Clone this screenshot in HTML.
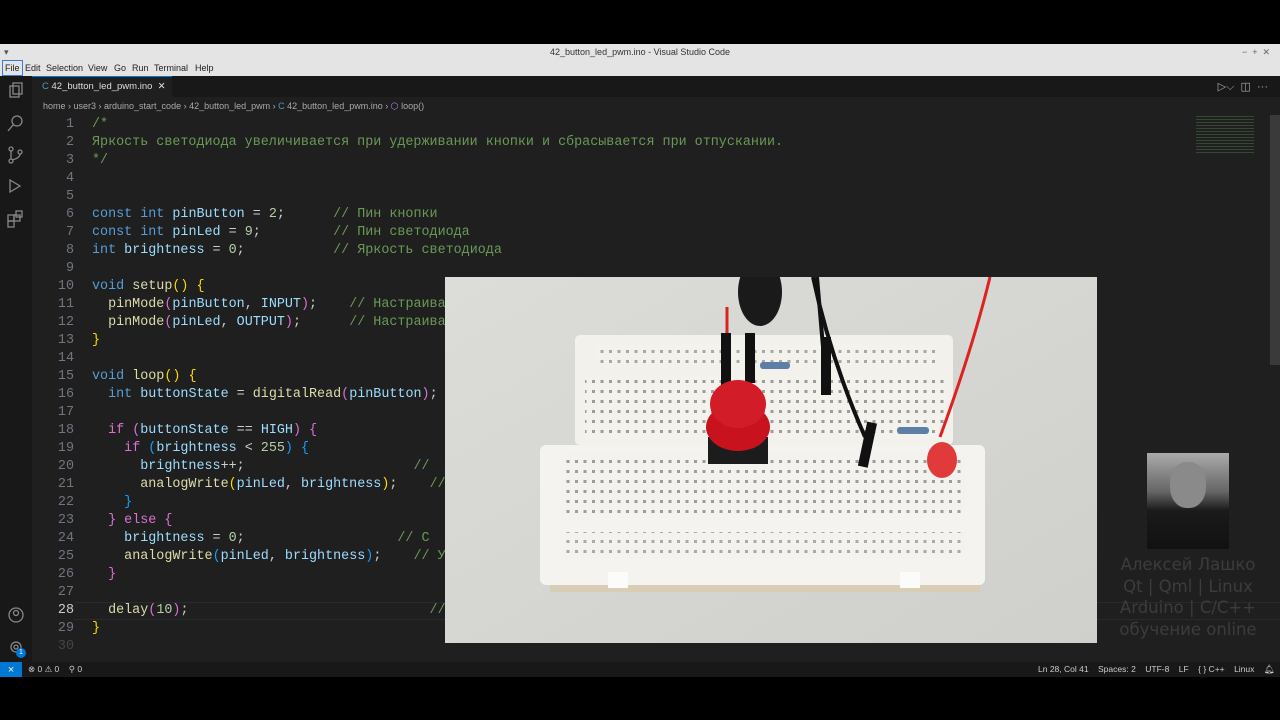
<!DOCTYPE html>
<html><head><meta charset="utf-8"><style>
*{margin:0;padding:0;box-sizing:border-box}
body{width:1280px;height:720px;background:#000;position:relative;overflow:hidden;font-family:"Liberation Sans","DejaVu Sans",sans-serif}
.abs{position:absolute}
#title{left:0;top:44px;width:1280px;height:16px;background:#e4e4e4;font-size:9px;color:#333;text-align:center;line-height:16px}
#menu{left:0;top:60px;width:1280px;height:16px;background:#e4e4e4;font-size:9px;color:#222;line-height:16px}
#menu span{position:absolute;top:0}
#act{left:0;top:76px;width:32px;height:586px;background:#181818}
#tabs{left:32px;top:76px;width:1248px;height:21px;background:#181818}
#tab{left:32px;top:76px;width:140px;height:21px;background:#1f1f1f;border-top:1px solid #0078d4;color:#ddd;font-size:9.5px;line-height:20px;padding-left:10px}
#ed{left:32px;top:97px;width:1248px;height:565px;background:#1f1f1f}
#bc{left:43px;top:101px;font-size:9px;color:#aaa}
.ln{position:absolute;left:32px;width:42px;text-align:right;font:13.4px/18px "Liberation Mono",monospace;color:#6e7681}
.cd{position:absolute;left:92px;font:13.4px/18px "Liberation Mono","DejaVu Sans Mono",monospace;color:#ccc;white-space:pre}
.k{color:#569cd6}.c{color:#6a9955}.n{color:#b5cea8}.v{color:#9cdcfe}.f{color:#dcdcaa}.y{color:#ffd700}.p{color:#da70d6}.b{color:#179fff}
#status{left:0;top:662px;width:1280px;height:15px;background:#181818;color:#ccc;font-size:8.5px;line-height:15px}
</style></head><body>
<div id="title" class="abs">42_button_led_pwm.ino - Visual Studio Code<span style="position:absolute;right:10px;color:#666">−&nbsp;&nbsp;+&nbsp;&nbsp;✕</span><span style="position:absolute;left:4px;color:#555">▾</span></div>
<div id="menu" class="abs"><span style="left:2px;border:1px solid #3a7bd5;padding:0 2px;line-height:14px">File</span><span style="left:25px">Edit</span><span style="left:46px">Selection</span><span style="left:88px">View</span><span style="left:114px">Go</span><span style="left:132px">Run</span><span style="left:154px">Terminal</span><span style="left:195px">Help</span></div>
<div id="act" class="abs">
<svg width="32" height="586" fill="none" stroke="#888" stroke-width="1.3">
<rect x="10" y="10" width="9" height="11"/><rect x="13" y="7" width="9" height="11"/>
<circle cx="17" cy="45" r="5"/><path d="M13 49l-5 6"/>
<circle cx="11" cy="73" r="2"/><circle cx="11" cy="85" r="2"/><circle cx="20" cy="76" r="2"/><path d="M11 75v8M20 78q0 4-8 6"/>
<path d="M10 104l10 6-10 6z"/>
<rect x="8" y="139" width="6" height="6"/><rect x="14" y="139" width="6" height="6"/><rect x="8" y="145" width="6" height="6"/><rect x="16" y="135" width="6" height="6"/>
<circle cx="16" cy="539" r="7"/><circle cx="16" cy="537" r="2.5"/>
<circle cx="16" cy="571" r="5"/><circle cx="16" cy="571" r="2"/>
</svg><div class="abs" style="left:16px;top:572px;width:10px;height:10px;border-radius:5px;background:#0078d4;color:#fff;font-size:7px;text-align:center;line-height:10px">1</div></div>
<div id="tabs" class="abs"><span style="position:absolute;right:12px;top:4px;color:#aaa;font-size:11px">▷⌵ &nbsp;◫ &nbsp;···</span></div>
<div id="tab" class="abs"><span style="color:#519aba">C</span> 42_button_led_pwm.ino&nbsp; ✕</div>
<div id="ed" class="abs"></div>
<div id="bc" class="abs">home › user3 › arduino_start_code › 42_button_led_pwm › <span style="color:#519aba">C</span> 42_button_led_pwm.ino › <span style="color:#b180d7">⬡</span> loop()</div>
<div class="abs" style="left:1196px;top:114px;width:58px;height:40px;background:repeating-linear-gradient(#1f1f1f 0 2px,#3d5a3d 2px 3px);opacity:.7"></div>
<div class="abs" style="left:1270px;top:115px;width:10px;height:250px;background:#3a3a3a"></div>
<div class="abs" style="left:74px;top:602px;width:1206px;height:18px;border-top:1px solid #2a2a2a;border-bottom:1px solid #2a2a2a"></div>
<div class="abs" style="left:0;top:116px">
<div class="ln" style="top:0">1</div><div class="cd" style="top:0"><span class="c">/*</span></div>
<div class="ln" style="top:18px">2</div><div class="cd" style="top:18px"><span class="c">Яркость светодиода увеличивается при удерживании кнопки и сбрасывается при отпускании.</span></div>
<div class="ln" style="top:36px">3</div><div class="cd" style="top:36px"><span class="c">*/</span></div>
<div class="ln" style="top:54px">4</div>
<div class="ln" style="top:72px">5</div>
<div class="ln" style="top:90px">6</div><div class="cd" style="top:90px"><span class="k">const int</span> <span class="v">pinButton</span> = <span class="n">2</span>;      <span class="c">// Пин кнопки</span></div>
<div class="ln" style="top:108px">7</div><div class="cd" style="top:108px"><span class="k">const int</span> <span class="v">pinLed</span> = <span class="n">9</span>;         <span class="c">// Пин светодиода</span></div>
<div class="ln" style="top:126px">8</div><div class="cd" style="top:126px"><span class="k">int</span> <span class="v">brightness</span> = <span class="n">0</span>;           <span class="c">// Яркость светодиода</span></div>
<div class="ln" style="top:144px">9</div>
<div class="ln" style="top:162px">10</div><div class="cd" style="top:162px"><span class="k">void</span> <span class="f">setup</span><span class="y">()</span> <span class="y">{</span></div>
<div class="ln" style="top:180px">11</div><div class="cd" style="top:180px">  <span class="f">pinMode</span><span class="p">(</span><span class="v">pinButton</span>, <span class="v">INPUT</span><span class="p">)</span>;    <span class="c">// Настраива</span></div>
<div class="ln" style="top:198px">12</div><div class="cd" style="top:198px">  <span class="f">pinMode</span><span class="p">(</span><span class="v">pinLed</span>, <span class="v">OUTPUT</span><span class="p">)</span>;      <span class="c">// Настраива</span></div>
<div class="ln" style="top:216px">13</div><div class="cd" style="top:216px"><span class="y">}</span></div>
<div class="ln" style="top:234px">14</div>
<div class="ln" style="top:252px">15</div><div class="cd" style="top:252px"><span class="k">void</span> <span class="f">loop</span><span class="y">()</span> <span class="y">{</span></div>
<div class="ln" style="top:270px">16</div><div class="cd" style="top:270px">  <span class="k">int</span> <span class="v">buttonState</span> = <span class="f">digitalRead</span><span class="p">(</span><span class="v">pinButton</span><span class="p">)</span>;</div>
<div class="ln" style="top:288px">17</div>
<div class="ln" style="top:306px">18</div><div class="cd" style="top:306px">  <span class="p">if</span> <span class="p">(</span><span class="v">buttonState</span> == <span class="v">HIGH</span><span class="p">)</span> <span class="p">{</span></div>
<div class="ln" style="top:324px">19</div><div class="cd" style="top:324px">    <span class="p">if</span> <span class="b">(</span><span class="v">brightness</span> &lt; <span class="n">255</span><span class="b">)</span> <span class="b">{</span></div>
<div class="ln" style="top:342px">20</div><div class="cd" style="top:342px">      <span class="v">brightness</span>++;                     <span class="c">//</span></div>
<div class="ln" style="top:360px">21</div><div class="cd" style="top:360px">      <span class="f">analogWrite</span><span class="y">(</span><span class="v">pinLed</span>, <span class="v">brightness</span><span class="y">)</span>;    <span class="c">//</span></div>
<div class="ln" style="top:378px">22</div><div class="cd" style="top:378px">    <span class="b">}</span></div>
<div class="ln" style="top:396px">23</div><div class="cd" style="top:396px">  <span class="p">}</span> <span class="p">else</span> <span class="p">{</span></div>
<div class="ln" style="top:414px">24</div><div class="cd" style="top:414px">    <span class="v">brightness</span> = <span class="n">0</span>;                   <span class="c">// С</span></div>
<div class="ln" style="top:432px">25</div><div class="cd" style="top:432px">    <span class="f">analogWrite</span><span class="b">(</span><span class="v">pinLed</span>, <span class="v">brightness</span><span class="b">)</span>;    <span class="c">// У</span></div>
<div class="ln" style="top:450px">26</div><div class="cd" style="top:450px">  <span class="p">}</span></div>
<div class="ln" style="top:468px">27</div>
<div class="ln" style="top:486px;color:#ccc">28</div><div class="cd" style="top:486px">  <span class="f">delay</span><span class="p">(</span><span class="n">10</span><span class="p">)</span>;                              <span class="c">// З</span></div>
<div class="ln" style="top:504px">29</div><div class="cd" style="top:504px"><span class="y">}</span></div>
<div class="ln" style="top:522px;color:#444">30</div>
</div>
<svg class="abs" style="left:445px;top:277px" width="652" height="366">
<defs><linearGradient id="bg" x1="0" y1="0" x2="1" y2="1"><stop offset="0" stop-color="#dcdcd8"/><stop offset="1" stop-color="#cfd0cc"/></linearGradient>
<pattern id="h" width="8.5" height="10" patternUnits="userSpaceOnUse"><rect width="8.5" height="10" fill="#f3f2ee"/><rect x="2.5" y="3" width="3" height="3" fill="#777"/></pattern></defs>
<rect width="652" height="366" fill="url(#bg)"/>
<rect x="105" y="305" width="430" height="10" fill="#d8cdb5"/>
<rect x="95" y="168" width="445" height="140" rx="6" fill="#f4f3ef"/>
<rect x="130" y="58" width="378" height="110" rx="5" fill="#f2f1ec"/>
<rect x="150" y="66" width="340" height="20" fill="url(#h)" opacity=".6"/>
<rect x="140" y="100" width="360" height="62" fill="url(#h)" opacity=".7"/>
<rect x="120" y="176" width="400" height="60" fill="url(#h)" opacity=".7"/>
<rect x="120" y="255" width="400" height="22" fill="url(#h)" opacity=".6"/>
<rect x="163" y="295" width="20" height="16" fill="#fbfbfa"/><rect x="455" y="295" width="20" height="16" fill="#fbfbfa"/>
<path d="M282 75V30" stroke="#d22" stroke-width="3" fill="none"/>
<path d="M545 0 Q528 70 495 160" stroke="#d22" stroke-width="3" fill="none"/>
<path d="M368 0 Q385 80 420 160" stroke="#111" stroke-width="4" fill="none"/>
<path d="M372 0 L378 70" stroke="#111" stroke-width="4" fill="none"/>
<ellipse cx="315" cy="15" rx="22" ry="34" fill="#1a1a1a"/>
<rect x="276" y="56" width="10" height="55" fill="#111"/><rect x="300" y="56" width="10" height="50" fill="#111"/>
<rect x="376" y="60" width="10" height="58" fill="#111"/>
<rect x="315" y="85" width="30" height="7" rx="3" fill="#5c7fa6"/>
<rect x="452" y="150" width="32" height="7" rx="3" fill="#5c7fa6"/>
<rect x="418" y="145" width="10" height="45" fill="#111" transform="rotate(12 422 165)"/>
<rect x="263" y="160" width="60" height="27" fill="#1c1c1c"/>
<ellipse cx="293" cy="150" rx="32" ry="24" fill="#c8131f"/>
<ellipse cx="293" cy="127" rx="28" ry="24" fill="#d21d28"/>
<ellipse cx="497" cy="183" rx="15" ry="18" fill="#e03a3a"/>
</svg>
<div class="abs" style="left:1147px;top:453px;width:82px;height:96px;background:linear-gradient(#aaa,#666 40%,#1a1a1a 60%,#111)"></div>
<div class="abs" style="left:1170px;top:462px;width:36px;height:46px;border-radius:45%;background:#8a8a8a"></div>
<div class="abs" style="left:1108px;top:554px;width:160px;font:16.5px/21.5px 'DejaVu Sans',sans-serif;color:#3c3c3c;text-align:center">Алексей Лашко<br>Qt | Qml | Linux<br>Arduino | C/C++<br>обучение online</div>
<div id="status" class="abs"><span style="position:absolute;left:0;width:22px;height:15px;background:#0078d4;color:#fff;text-align:center">⨯</span><span style="position:absolute;left:28px">⊗ 0 ⚠ 0 &nbsp;&nbsp; ⚲ 0</span><span style="position:absolute;left:1038px">Ln 28, Col 41 &nbsp;&nbsp; Spaces: 2 &nbsp;&nbsp; UTF-8 &nbsp;&nbsp; LF &nbsp;&nbsp; { } C++ &nbsp;&nbsp; Linux &nbsp;&nbsp; 🔔︎</span></div>
</body></html>
